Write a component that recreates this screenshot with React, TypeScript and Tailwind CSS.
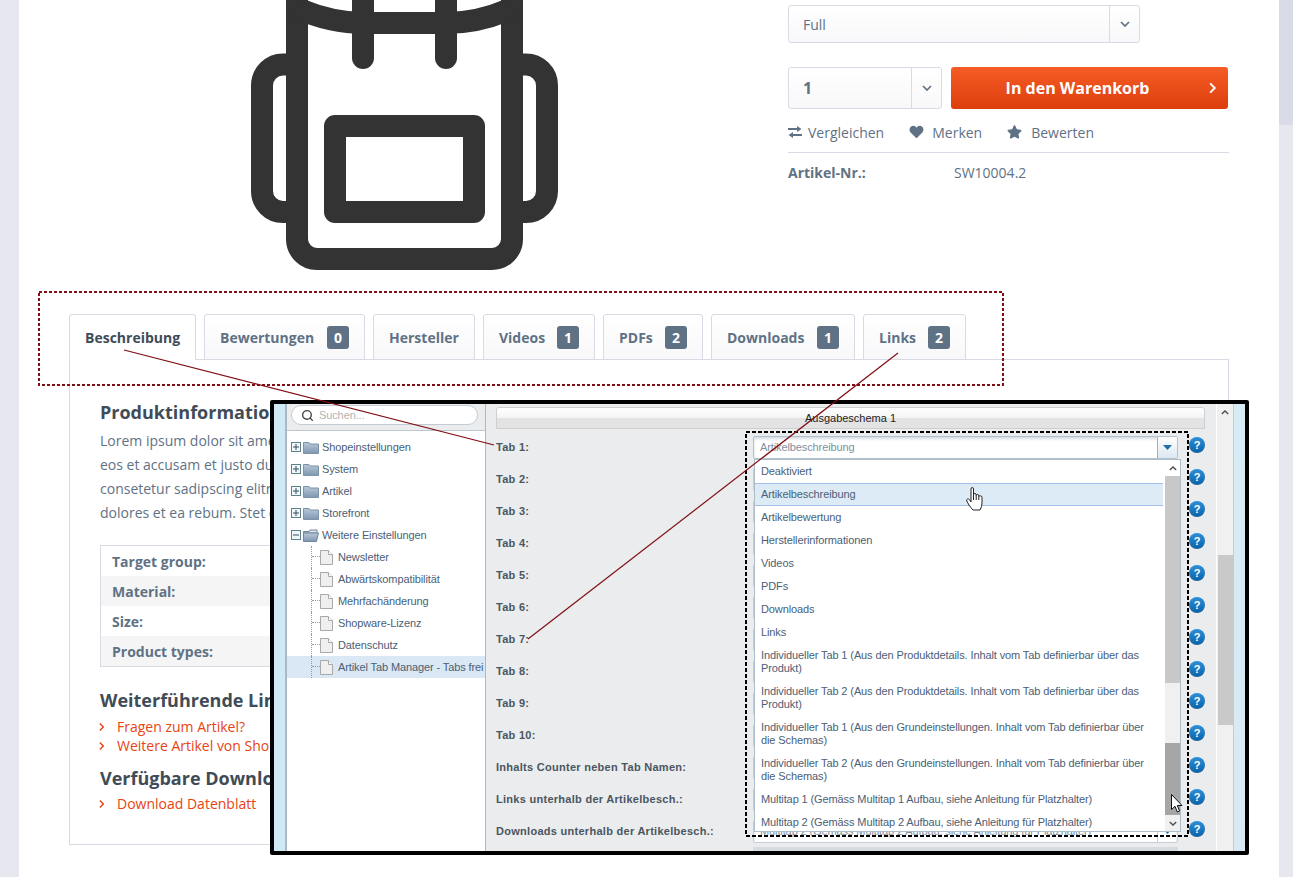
import { FaHeart, FaStar } from "react-icons/fa";
import { Search } from "lucide-react";

const TABS = [
  { label: "Beschreibung", width: "w-[127px]", active: true },
  { label: "Bewertungen", width: "w-[161px]", count: 0 },
  { label: "Hersteller", width: "w-[102px]" },
  { label: "Videos", width: "w-[112px]", count: 1 },
  { label: "PDFs", width: "w-[100px]", count: 2 },
  { label: "Downloads", width: "w-[144px]", count: 1 },
  { label: "Links", width: "w-[103px]", count: 2 },
];

const FOLDERS = ["Shopeinstellungen", "System", "Artikel", "Storefront"];
const DOCS = ["Newsletter", "Abwärtskompatibilität", "Mehrfachänderung", "Shopware-Lizenz", "Datenschutz", "Artikel Tab Manager - Tabs frei definieren"];
const LABELS = ["Tab 1:", "Tab 2:", "Tab 3:", "Tab 4:", "Tab 5:", "Tab 6:", "Tab 7:", "Tab 8:", "Tab 9:", "Tab 10:", "Inhalts Counter neben Tab Namen:", "Links unterhalb der Artikelbesch.:", "Downloads unterhalb der Artikelbesch.:"];
const SPECS = ["Target group:", "Material:", "Size:", "Product types:"];

const OPTIONS = [
  "Deaktiviert",
  "Artikelbeschreibung",
  "Artikelbewertung",
  "Herstellerinformationen",
  "Videos",
  "PDFs",
  "Downloads",
  "Links",
  "Individueller Tab 1 (Aus den Produktdetails. Inhalt vom Tab definierbar über das Produkt)",
  "Individueller Tab 2 (Aus den Produktdetails. Inhalt vom Tab definierbar über das Produkt)",
  "Individueller Tab 1 (Aus den Grundeinstellungen. Inhalt vom Tab definierbar über die Schemas)",
  "Individueller Tab 2 (Aus den Grundeinstellungen. Inhalt vom Tab definierbar über die Schemas)",
  "Multitap 1 (Gemäss Multitap 1 Aufbau, siehe Anleitung für Platzhalter)",
  "Multitap 2 (Gemäss Multitap 2 Aufbau, siehe Anleitung für Platzhalter)",
];

function Chevron({ dir = "down", className }: { dir?: "down" | "right" | "up"; className?: string }) {
  const points = dir === "down" ? "1,1 5,5 9,1" : dir === "up" ? "1,5 5,1 9,5" : "1,1 5,5 1,9";
  const box = dir === "right" ? "0 0 7 10" : "0 0 10 6";
  return (
    <svg viewBox={box} className={className} fill="none" stroke="currentColor" strokeWidth="1.7">
      <polyline points={points} />
    </svg>
  );
}

function Backpack() {
  // drawn in the page's coordinates, shifted by the left edge of the column
  return (
    <svg viewBox="69 0 719 280" className="w-[719px] h-[280px]" fill="none" stroke="#333333" strokeWidth="22">
      <path d="M297 -10 V239 A20 20 0 0 0 317 259 H492 A20 20 0 0 0 512 239 V-10" />
      <path d="M297 8 Q330 23 365 23 H445 Q480 23 512 8" />
      <path d="M363 0 V58" strokeLinecap="round" />
      <path d="M446 0 V58" strokeLinecap="round" />
      <path d="M286 64.5 H283 A21 21 0 0 0 262 85.5 V191 A21 21 0 0 0 283 212 H286" />
      <path d="M523 64.5 H526 A21 21 0 0 1 547 85.5 V191 A21 21 0 0 1 526 212 H523" />
      <rect x="335" y="126" width="139" height="86" strokeLinejoin="round" />
    </svg>
  );
}

function CompareIcon() {
  return (
    <svg viewBox="0 0 14 12" className="w-[14px] h-[12px]" fill="currentColor">
      <path d="M0 2H9V0L13.5 3L9 6V4H0Z" />
      <path d="M14 8H5V6L.5 9L5 12V10H14Z" />
    </svg>
  );
}

function SelectBox({ value, bold, className, arrowW }: { value: string; bold?: boolean; className: string; arrowW: string }) {
  return (
    <div className={`flex items-stretch rounded-[3px] border border-[#dadae5] bg-gradient-to-b from-white to-[#f8f8fa] ${className}`}>
      <div className={`flex-1 flex items-center pl-[14px] text-[#5f7285] ${bold ? "text-[16px] font-bold" : "text-[14px]"}`}>{value}</div>
      <div className={`flex items-center justify-center border-l border-[#dadae5] ${arrowW}`}>
        <Chevron className="w-[10px] h-[6px] text-[#5f7285]" />
      </div>
    </div>
  );
}

function BuyBox() {
  return (
    <div className="w-[441px] pt-[5px]">
      <SelectBox value="Full" className="w-[352px] h-[38px]" arrowW="w-[30px]" />
      <div className="flex gap-[9px] mt-[24px] w-[440px]">
        <SelectBox value="1" bold className="w-[154px] h-[42px]" arrowW="w-[30px]" />
        <button className="relative flex-1 h-[42px] rounded-[3px] pr-[24px] bg-gradient-to-b from-[#f65c25] to-[#dc3e0b] text-white text-[16px] font-bold">
          In den Warenkorb
          <Chevron dir="right" className="absolute right-[11px] top-[15px] w-[8px] h-[12px]" />
        </button>
      </div>
      <div className="flex items-center h-[20px] mt-[13px] text-[14px] text-[#5f7285]">
        <CompareIcon />
        <span className="ml-[6px]">Vergleichen</span>
        <FaHeart className="ml-[25px] w-[15px] h-[14px]" />
        <span className="ml-[8px]">Merken</span>
        <FaStar className="ml-[25px] w-[15px] h-[14px]" />
        <span className="ml-[9px]">Bewerten</span>
      </div>
      <div className="mt-[10px] border-t border-[#dadae5] pt-[10px] flex text-[14px] text-[#5f7285] leading-[20px]">
        <span className="w-[166px] font-bold">Artikel-Nr.:</span>
        <span>SW10004.2</span>
      </div>
    </div>
  );
}

function TabBar() {
  return (
    <div className="flex gap-[8px] h-[46px] border-b border-[#dadae5]">
      {TABS.map((t) => (
        <div
          key={t.label}
          className={`flex items-center justify-between px-[15px] h-[46px] rounded-t-[3px] border border-[#dadae5] text-[14px] font-bold ${t.width} ${
            t.active ? "bg-white border-b-white text-[#3f4c58]" : "bg-gradient-to-b from-white to-[#f8f8fa] text-[#5f7285]"
          }`}
        >
          <span>{t.label}</span>
          {t.count !== undefined && (
            <span className="flex items-center justify-center w-[22px] h-[23px] rounded-[3px] bg-[#5f7285] text-white">{t.count}</span>
          )}
        </div>
      ))}
    </div>
  );
}

function LinkRow({ label }: { label: string }) {
  return (
    <div className="flex items-center h-[19px] text-[14px] text-[#e74413]">
      <Chevron dir="right" className="w-[6px] h-[10px] ml-[-1px] text-[#e74413]" />
      <span className="ml-[12px]">{label}</span>
    </div>
  );
}

function Description() {
  return (
    <div className="border border-t-0 border-[#dadae5] h-[485px] px-[30px] pt-[40px]">
      <h2 className="text-[18px] font-bold leading-[24px] text-[#3f4c58]">Produktinformationen "Rucksack"</h2>
      <p className="mt-[5px] text-[14px] leading-[24px] text-[#5f7285]">
        Lorem ipsum dolor sit amet, consetetur sadipscing elitr, sed diam nonumy eirmod tempor invidunt ut labore et dolore magna aliquyam erat, sed diam voluptua. At vero
        eos et accusam et justo duo dolores et ea rebum. Stet clita kasd gubergren, no sea takimata sanctus est Lorem ipsum dolor sit amet. Lorem ipsum dolor sit amet,
        consetetur sadipscing elitr, sed diam nonumy eirmod tempor invidunt ut labore et dolore magna aliquyam erat, sed diam voluptua. At vero eos et accusam et justo duo
        dolores et ea rebum. Stet clita kasd gubergren, no sea takimata sanctus est Lorem ipsum dolor sit amet.
      </p>
      <div className="mt-[20px] border border-[#dadae5]">
        {SPECS.map((s, i) => (
          <div key={s} className={`flex items-center h-[30px] pl-[11px] text-[14px] font-bold text-[#5f7285] ${i % 2 ? "bg-[#f5f5f6]" : "bg-white"}`}>
            {s}
          </div>
        ))}
      </div>
      <h2 className="mt-[21px] text-[18px] font-bold leading-[24px] text-[#3f4c58]">Weiterführende Links zu "Rucksack"</h2>
      <div className="mt-[5px]">
        <LinkRow label="Fragen zum Artikel?" />
        <LinkRow label="Weitere Artikel von Shopware" />
      </div>
      <h2 className="mt-[11px] text-[18px] font-bold leading-[24px] text-[#3f4c58]">Verfügbare Downloads:</h2>
      <div className="mt-[4px]">
        <LinkRow label="Download Datenblatt" />
      </div>
    </div>
  );
}

function Expander({ open }: { open?: boolean }) {
  return (
    <svg viewBox="0 0 10 10" className="w-[10px] h-[10px] shrink-0">
      <rect x=".5" y=".5" width="9" height="9" fill="#f1f6f8" stroke="#5d8290" />
      <path d={open ? "M2 5H8" : "M2 5H8M5 2V8"} stroke="#33505c" />
    </svg>
  );
}

function Folder({ open }: { open?: boolean }) {
  return (
    <svg viewBox="0 0 16 13" className="w-[16px] h-[13px] shrink-0 ml-[2px]">
      <defs>
        <linearGradient id="folderFill" x1="0" y1="0" x2="0" y2="1">
          <stop offset="0" stopColor="#b9c8d8" />
          <stop offset="1" stopColor="#7f97b0" />
        </linearGradient>
      </defs>
      {open ? (
        <>
          <path d="M.5 2.5H6L7 1H14V4H.5Z" fill="#dfe6ed" stroke="#6f879c" />
          <path d="M.5 12.5V4H15.5L13.5 12.5Z" fill="url(#folderFill)" stroke="#6f879c" />
        </>
      ) : (
        <path d="M.5 12.5V1.5H6L7 3H15.5V12.5Z" fill="url(#folderFill)" stroke="#7d93a8" />
      )}
    </svg>
  );
}

function Doc() {
  return (
    <svg viewBox="0 0 13 15" className="w-[13px] h-[15px] shrink-0">
      <path d="M.5 .5H8.5L12.5 4.5V14.5H.5Z" fill="#efefef" stroke="#a9a9a9" />
      <path d="M8.5 .5V4.5H12.5" fill="#fff" stroke="#a9a9a9" />
    </svg>
  );
}

function Tree() {
  return (
    <div className="w-[201px] shrink-0 flex flex-col bg-white border-l-2 border-r border-[#aab9c6] tracking-[-0.11px]">
      <div className="h-[27px] shrink-0 bg-[#ebecee] border-b border-[#bcc7d0] px-[4px] pt-[1px]">
        <div className="flex items-center h-[20px] w-[187px] rounded-full bg-white border border-[#c3ccd4] pl-[9px] text-[#b3b3b3]">
          <Search className="w-[13px] h-[13px] text-[#444]" strokeWidth={2.5} />
          <span className="ml-[5px]">Suchen...</span>
        </div>
      </div>
      <div className="pt-[5px]">
        {FOLDERS.map((f) => (
          <div key={f} className="flex items-center h-[22px] pl-[4px] whitespace-nowrap">
            <Expander />
            <Folder />
            <span className="ml-[3px]">{f}</span>
          </div>
        ))}
        <div className="flex items-center h-[22px] pl-[4px]">
          <Expander open />
          <Folder open />
          <span className="ml-[3px]">Weitere Einstellungen</span>
        </div>
        {DOCS.map((d, i) => (
          <div key={d} className={`flex items-center h-[22px] pl-[24px] whitespace-nowrap overflow-hidden ${i === 5 ? "bg-[#d9e8f4]" : ""}`}>
            <div className={`w-[9px] h-[22px] shrink-0 border-l border-dotted border-[#999] ${i === 5 ? "h-[11px] self-start" : ""}`}>
              <div className="h-[11px] border-b border-dotted border-[#999]" />
            </div>
            <Doc />
            <span className="ml-[5px]">{d}</span>
          </div>
        ))}
      </div>
    </div>
  );
}

function HelpIcon() {
  return (
    <span className="flex items-center justify-center w-[16px] h-[16px] rounded-full bg-gradient-to-b from-[#2b90d9] to-[#0f62a5] text-white text-[11px] font-bold leading-none">?</span>
  );
}

function Combo({ value, focused }: { value: string; focused?: boolean }) {
  return (
    <div className={`flex w-[425px] h-[23px] bg-white border rounded-[2px] shadow-[inset_0_2px_3px_#d5dbe0] ${focused ? "border-[#b3c2cf]" : "border-[#c5ced6]"}`}>
      <div className="flex-1 flex items-center pl-[6px] text-[#8090a0] font-normal whitespace-nowrap overflow-hidden tracking-[-0.11px]">{value}</div>
      <div className={`flex items-center justify-center w-[20px] border-l ${focused ? "border-[#8db4dc] bg-gradient-to-b from-white to-[#dce8f2]" : "border-[#c5ced6]"}`}>
        <svg viewBox="0 0 9 5" className="w-[9px] h-[5px]">
          <path d="M0 0H9L4.5 5Z" fill="#1f6fa8" />
        </svg>
      </div>
    </div>
  );
}

function HandCursor() {
  return (
    <svg viewBox="0 0 17 24" className="absolute left-[692px] top-[83px] w-[17px] h-[24px]" fill="#fff" stroke="#222" strokeWidth="1">
      <path d="M5 2Q5 .5 6.2 .5Q7.5 .5 7.5 2V7.5Q7.5 6.5 9 6.5Q10.2 6.5 10.2 8V8.5Q10.2 7.5 11.5 7.5Q12.8 7.5 12.8 9V9.5Q13 8.8 14.2 8.8Q16 8.8 16 10.5V16Q16 20 14 23H7Q5 21 3 18L.8 14Q.2 12.5 1.5 12Q2.8 11.5 3.8 13L5 15Z" />
      <path d="M7.5 7.5V13M10.2 8.5V13M12.8 9.5V13" fill="none" />
    </svg>
  );
}

function ArrowCursor() {
  return (
    <svg viewBox="0 0 12 19" className="absolute left-[897px] top-[390px] w-[12px] h-[19px]" fill="#fff" stroke="#111" strokeWidth="1">
      <path d="M.5 .5V15.5L4 12.3L6.3 18L8.6 17L6.3 11.5H11Z" />
    </svg>
  );
}

function Dropdown() {
  return (
    <div className="absolute left-[480px] top-[55px] w-[427px] h-[373px] flex bg-white border border-[#aebdca] overflow-hidden">
      <div className="flex-1 min-w-0 pr-[2px] tracking-[-0.11px]">
        {OPTIONS.map((o, i) => (
          <div
            key={o}
            className={`flex items-center px-[6px] leading-[13px] text-[#4b6076] ${i >= 8 && i <= 11 ? "h-[36px]" : "h-[23px]"} ${
              i === 1 ? "bg-[#dcebf6] border-y border-[#a3c0ea]" : ""
            }`}
          >
            {o}
          </div>
        ))}
      </div>
      <div className="w-[15px] shrink-0 flex flex-col bg-[#f0f0f0]">
        <div className="flex items-center justify-center h-[16px] shrink-0 bg-white">
          <Chevron dir="up" className="w-[8px] h-[5px] text-[#505050]" />
        </div>
        <div className="h-[207px] shrink-0 bg-[#c8c8c8]" />
        <div className="h-[60px] shrink-0" />
        <div className="h-[72px] shrink-0 bg-[#a6a6a6]" />
        <div className="flex-1 flex items-center justify-center bg-[#f0f0f0]">
          <Chevron className="w-[8px] h-[5px] text-[#505050]" />
        </div>
      </div>
    </div>
  );
}

function SettingsForm() {
  return (
    <div className="flex-1 min-w-0 bg-[#ebecee] text-[#4a5660]">
      <div className="pl-[10px] pt-[3px]">
        <div className="flex items-center justify-center w-[709px] h-[22px] rounded-t-[3px] border border-[#cfcfcf] bg-[linear-gradient(#ffffff,#f4f4f4_50%,#e3e3e3_50%)] text-[#222]">
          Ausgabeschema 1
        </div>
      </div>
      <div className="mt-[2px]">
        {LABELS.map((l, i) => (
          <div key={l} className="flex items-center h-[32px] pl-[10px]">
            <span className="w-[257px] shrink-0 font-bold whitespace-nowrap tracking-[0.28px]">{l}</span>
            <Combo value={i === 0 ? "Artikelbeschreibung" : OPTIONS[13]} focused={i === 0} />
            <span className="ml-[11px] -mt-[4px]">
              <HelpIcon />
            </span>
          </div>
        ))}
        <div className="ml-[267px] w-[425px] h-[4px] bg-[#d5dbe0]" />
      </div>
    </div>
  );
}

function ConfigWindow() {
  return (
    <div className="absolute left-[270px] top-[400px] w-[979px] h-[455px] border-4 border-black rounded-[2px] bg-[#ebecee] overflow-hidden font-['Liberation_Sans',Arial,sans-serif] text-[11px] text-[#4b6076]">
      <div className="flex h-full">
        <div className="w-[11px] shrink-0 bg-[#cfeaf4]" />
        <Tree />
        <SettingsForm />
        <div className="w-[17px] shrink-0 flex flex-col items-center bg-[#f0f0f0] border-l border-white">
          <div className="flex items-center justify-center h-[16px] w-full">
            <Chevron dir="up" className="w-[8px] h-[5px] text-[#505050]" />
          </div>
          <div className="mt-[135px] h-[170px] w-[15px] bg-[#c9c9c9]" />
        </div>
        <div className="w-[12px] shrink-0 bg-gradient-to-b from-[#d6ecf5] to-[#d9e9f4] border-l border-[#b9cfdf]" />
      </div>
      <Dropdown />
      <HandCursor />
      <ArrowCursor />
    </div>
  );
}

export default function App() {
  return (
    <div className="relative flex w-[1293px] h-[877px] overflow-hidden bg-[#e7e8ef] font-['Open_Sans',sans-serif]">
      <div className="w-[19px] shrink-0" />
      <main className="w-[1260px] shrink-0 bg-white px-[50px]">
        <div className="flex h-[314px]">
          <div className="w-[719px]">
            <Backpack />
          </div>
          <BuyBox />
        </div>
        <TabBar />
        <Description />
      </main>
      <div className="flex-1">
        <div className="h-[125px] bg-[#d9dce6]" />
      </div>

      <ConfigWindow />
      {/* hand-drawn annotations on top of the screenshot */}
      <svg className="absolute inset-0 w-[1293px] h-[877px] pointer-events-none" viewBox="0 0 1293 877" fill="none">
        <rect x="39" y="292" width="964" height="93" stroke="#7f0f14" strokeWidth="2" strokeDasharray="3 2" />
        <rect x="746" y="432" width="442" height="404" stroke="#000" strokeWidth="2" strokeDasharray="4 2" />
        <line x1="124" y1="350" x2="494" y2="445" stroke="#7f0f14" strokeWidth="1.2" />
        <line x1="898" y1="353" x2="528" y2="639" stroke="#7f0f14" strokeWidth="1.2" />
      </svg>
    </div>
  );
}
